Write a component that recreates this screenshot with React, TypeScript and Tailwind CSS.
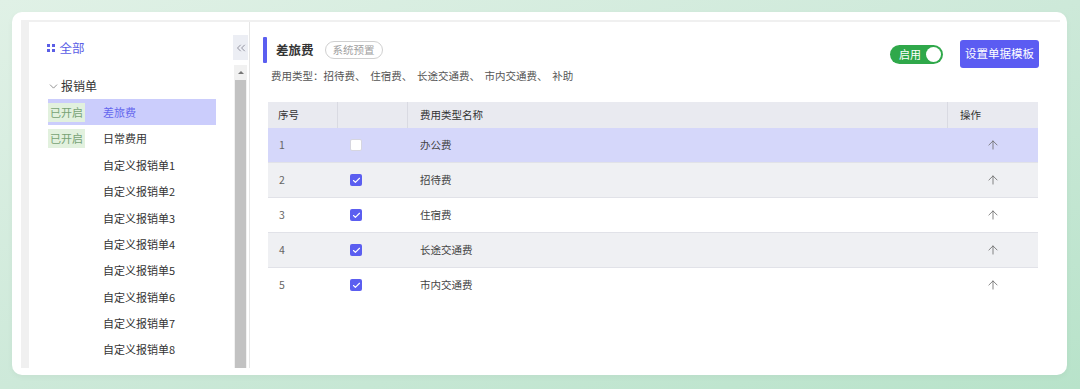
import { ArrowUp, Check, ChevronDown, ChevronsLeft } from 'lucide-react';

const forms = [
  { name: '差旅费', on: true, active: true },
  { name: '日常费用', on: true, active: false },
  ...[1, 2, 3, 4, 5, 6, 7, 8].map(n => ({ name: `自定义报销单${n}`, on: false, active: false })),
];

const rows = [
  { no: 1, name: '办公费', checked: false },
  { no: 2, name: '招待费', checked: true },
  { no: 3, name: '住宿费', checked: true },
  { no: 4, name: '长途交通费', checked: true },
  { no: 5, name: '市内交通费', checked: true },
];

function rowBg(i: number) {
  if (i === 0) return 'bg-[#d5d7fa]';
  return i % 2 === 1 ? 'bg-[#eff0f3]' : 'bg-white';
}

export default function App() {
  return (
    <div className="w-[1080px] h-[389px] overflow-hidden bg-gradient-to-br from-[#e0f1e6] via-[#cde9d9] to-[#b8e3ca] pt-[12px] pl-[12px] font-['Noto_Sans_CJK_SC',sans-serif]">
      <div className="w-[1055px] h-[363px] bg-white rounded-[10px] pt-[8px] pl-[9px] pr-[7px] pb-[7px] shadow-[0_2px_6px_rgba(0,0,0,0.04)]">
        <div className="h-full flex bg-[#f0f0f0] pl-[8px] pt-[2px]">
          {/* Sidebar */}
          <div className="w-[204px] bg-white flex flex-col">
            <div className="mt-[13px] h-[26px] pl-[18px] flex items-center gap-[5px] text-[#5b5ee6] text-[12.5px]">
              <span className="grid grid-cols-2 gap-[1.5px]">
                <span className="w-[3px] h-[3px] bg-[#5b5ee6]" />
                <span className="w-[3px] h-[3px] bg-[#5b5ee6]" />
                <span className="w-[3px] h-[3px] bg-[#5b5ee6]" />
                <span className="w-[3px] h-[3px] bg-[#5b5ee6]" />
              </span>
              全部
            </div>
            <div className="mt-[12px] h-[26px] pl-[18px] flex items-center gap-[1px] text-[#333] text-[12px]">
              <ChevronDown size={13} strokeWidth={1.3} className="text-[#666]" />
              报销单
            </div>
            {forms.map(f => (
              <div
                key={f.name}
                className={`ml-[19px] w-[168px] h-[26.4px] flex items-center text-[11px] ${f.active ? 'bg-[#cbcdfc]' : ''}`}
              >
                <div className="w-[55px] shrink-0">
                  {f.on && (
                    <span className="inline-flex items-center h-[19px] px-[2px] bg-[#e2f1de] text-[#77a275] text-[11px]">已开启</span>
                  )}
                </div>
                <span className={f.active ? 'text-[#6466ee]' : 'text-[#333]'}>{f.name}</span>
              </div>
            ))}
          </div>

          {/* Collapse + scrollbar */}
          <div className="w-[17px] bg-white flex flex-col border-r border-[#e6e6e6]">
            <div className="mt-[13px] w-[15px] h-[25px] bg-[#eceef4] flex items-center justify-center text-[#7d7d8c]">
              <ChevronsLeft size={14} strokeWidth={1.4} />
            </div>
            <div className="mt-[5px] ml-[1px] w-[13px] flex-1 flex flex-col bg-[#f1f1f1]">
              <div className="h-[15px] flex items-center justify-center">
                <span className="w-0 h-0 border-l-[3px] border-r-[3px] border-b-[3px] border-l-transparent border-r-transparent border-b-[#777]" />
              </div>
              <div className="flex-1 mx-[1px] bg-[#c2c2c2]" />
            </div>
          </div>

          {/* Main */}
          <div className="flex-1 bg-white pt-[15px] pl-[13px] pr-[21px]">
            <div className="flex items-start justify-between">
              <div>
                <div className="flex items-center h-[26px]">
                  <span className="w-[4px] h-[26px] rounded-[1px] bg-[#5b5ef0]" />
                  <span className="ml-[9px] text-[12.5px] font-bold text-[#333]">差旅费</span>
                  <span className="ml-[11px] h-[18px] px-[7px] rounded-full border border-[#d0d0d0] text-[10.5px] text-[#a0a0a0] flex items-center">系统预置</span>
                </div>
                <div className="mt-[6px] ml-[8px] text-[10.5px] text-[#555] leading-[14px] whitespace-pre">
                  费用类型：招待费、  住宿费、  长途交通费、  市内交通费、  补助
                </div>
              </div>
              <div className="flex items-center mt-[3px]">
                <div className="w-[53px] h-[19px] rounded-full bg-[#2fa84a] flex items-center justify-between pl-[9px] pr-[2px]">
                  <span className="text-white text-[11px] leading-none">启用</span>
                  <span className="w-[15px] h-[15px] rounded-full bg-white" />
                </div>
                <button className="ml-[17px] w-[79px] h-[28px] rounded-[3px] bg-[#5b5cf2] text-white text-[11.5px]">设置单据模板</button>
              </div>
            </div>

            {/* Table */}
            <div className="mt-[19px] ml-[5px] w-[770px] text-[10.5px]">
              <div className="grid grid-cols-[70px_70px_540px_90px] h-[26px] bg-[#e9eaf0] text-[#333]">
                <div className="pl-[10px] flex items-center border-r border-[#d9dae2]">序号</div>
                <div className="border-r border-[#d9dae2]" />
                <div className="pl-[12px] flex items-center border-r border-[#d9dae2]">费用类型名称</div>
                <div className="pl-[12px] flex items-center">操作</div>
              </div>
              {rows.map((r, i) => (
                <div
                  key={r.no}
                  className={`grid grid-cols-[70px_70px_540px_90px] h-[35px] border-b ${i === 4 ? 'border-transparent' : 'border-[#e1e2e8]'} ${rowBg(i)}`}
                >
                  <div className="pl-[11px] flex items-center text-[#666]">{r.no}</div>
                  <div className="pl-[12px] flex items-center">
                    {r.checked ? (
                      <span className="w-[12px] h-[12px] rounded-[2px] bg-[#5b5ef0] flex items-center justify-center">
                        <Check size={9} strokeWidth={3} className="text-white" />
                      </span>
                    ) : (
                      <span className="w-[12px] h-[12px] rounded-[2px] bg-white border border-[#d6d6e0]" />
                    )}
                  </div>
                  <div className="pl-[12px] flex items-center text-[#444]">{r.name}</div>
                  <div className="flex items-center justify-center text-[#6a6a6a]">
                    <ArrowUp size={14} strokeWidth={1.4} />
                  </div>
                </div>
              ))}
            </div>
          </div>
        </div>
      </div>
    </div>
  );
}
